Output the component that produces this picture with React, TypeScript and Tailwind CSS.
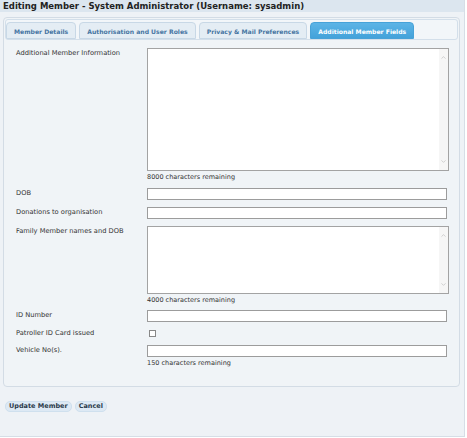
import { ChevronDown, ChevronUp } from "lucide-react"

const font = { fontFamily: '"DejaVu Sans", Verdana, sans-serif' }

function TextBox({ h }: { h: string }) {
  return (
    <div className={`flex ${h} w-[302px] border border-[#a3a3a3] bg-white`}>
      <div className="flex-1" />
      <div className="flex w-[9px] flex-col items-center justify-between bg-[#f6f6f6] py-[5px]">
        <ChevronUp className="h-[7px] w-[7px] text-[#b5b5b5]" strokeWidth={2} />
        <ChevronDown className="h-[7px] w-[7px] text-[#b5b5b5]" strokeWidth={2} />
      </div>
    </div>
  )
}

function Input() {
  return <div className="h-[12px] w-[300px] border border-[#9c9c9c] bg-white" />
}

function Row({ label, children, className = "" }: { label: string; children: React.ReactNode; className?: string }) {
  return (
    <div className={`grid grid-cols-[131px_1fr] ${className}`}>
      <div className="text-[6.7px] leading-[10px] text-[#333]">{label}</div>
      <div>{children}</div>
    </div>
  )
}

function Remaining({ text }: { text: string }) {
  return <div className="mt-[2px] text-[6.5px] leading-[9px] text-[#333]">{text}</div>
}

const tabs = ["Member Details", "Authorisation and User Roles", "Privacy & Mail Preferences", "Additional Member Fields"]

export default function App() {
  return (
    <div className="h-[438px] w-[467px] bg-white" style={font}>
      <div className="flex h-[437px] w-[465px] flex-col border-r border-b border-[#d6dee6] bg-[#eef2f6]">
        {/* header */}
        <div className="h-[12px] bg-[#dce6ef] px-[3px] text-[8.5px] font-bold leading-[12px] text-[#222]">
          Editing Member - System Administrator (Username: sysadmin)
        </div>

        {/* tab panel */}
        <div className="ml-[3px] mt-[5px] h-[370px] w-[457px] rounded-[4px] border border-[#d3dce5] bg-[#f0f4f7]">
          <div className="m-[1px] flex h-[21px] gap-[3px] rounded-[3px] border border-[#d3dfea] bg-[#f2f6f9] pt-[2px]">
            {tabs.map((t, i) => (
              <div
                key={t}
                className={
                  i === 3
                    ? "rounded-t-[4px] border border-[#47a2d8] bg-gradient-to-b from-[#5cb4e6] to-[#43a2da] px-[7px] text-[6.1px] font-bold leading-[17px] text-white"
                    : "rounded-t-[4px] border border-[#c8d8e6] bg-[#e4edf4] px-[7px] text-[6.1px] font-bold leading-[17px] text-[#4675a2]"
                }
              >
                {t}
              </div>
            ))}
          </div>

          <div className="flex flex-col pl-[12px] pt-[7px]">
            <Row label="Additional Member Information">
              <TextBox h="h-[123px]" />
              <Remaining text="8000 characters remaining" />
            </Row>
            <Row label="DOB" className="mt-[6px]">
              <Input />
            </Row>
            <Row label="Donations to organisation" className="mt-[7px]">
              <Input />
            </Row>
            <Row label="Family Member names and DOB" className="mt-[7px]">
              <TextBox h="h-[68px]" />
              <Remaining text="4000 characters remaining" />
            </Row>
            <Row label="ID Number" className="mt-[5px]">
              <Input />
            </Row>
            <Row label="Patroller ID Card issued" className="mt-[6px]">
              <div className="ml-[2px] mt-[2px] h-[7px] w-[7px] border border-[#888] bg-white" />
            </Row>
            <Row label="Vehicle No(s)." className="mt-[7px]">
              <Input />
              <Remaining text="150 characters remaining" />
            </Row>
          </div>
        </div>

        {/* actions */}
        <div className="ml-[5px] mt-[14px] flex gap-[3px]">
          <button className="rounded-[5px] border border-[#cfe0ee] bg-[#dde9f4] px-[3px] text-[6.5px] font-bold leading-[9px] text-[#2a3a4a]">
            Update Member
          </button>
          <button className="rounded-[5px] border border-[#cfe0ee] bg-[#dde9f4] px-[3px] text-[6.5px] font-bold leading-[9px] text-[#2a3a4a]">
            Cancel
          </button>
        </div>
      </div>
    </div>
  )
}
